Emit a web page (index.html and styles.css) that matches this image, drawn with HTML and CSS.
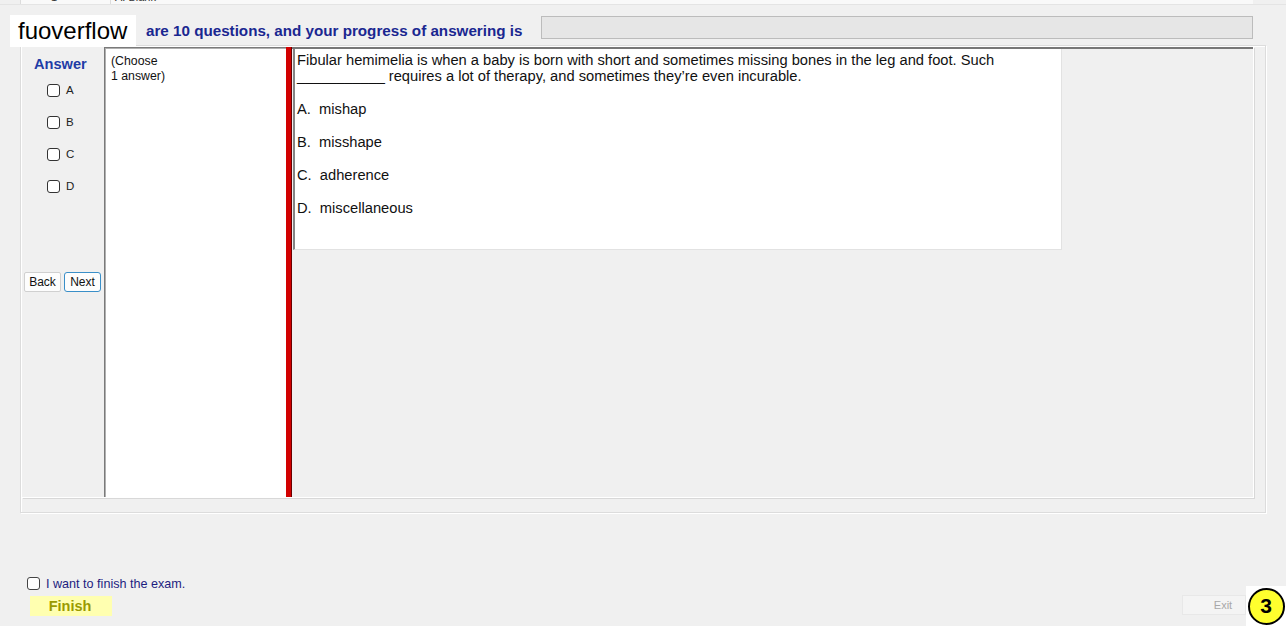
FILE: index.html
```html
<!DOCTYPE html>
<html>
<head>
<meta charset="utf-8">
<link rel="stylesheet" href="styles.css">
</head>
<body>
<div class="page">
  <div class="topstrip">
    <div class="cell c1"><span>1</span></div>
    <div class="cell c2"><span>A. Blank</span></div>
  </div>
  <div class="header">
    <div class="title">are 10 questions, and your progress of answering is</div>
    <div class="progress"></div>
  </div>
  <div class="group">
    <div class="frame">
      <div class="leftcol">
        <div class="answer">Answer</div>
        <div class="opts">
          <label class="opt"><span class="cb"></span>A</label>
          <label class="opt"><span class="cb"></span>B</label>
          <label class="opt"><span class="cb"></span>C</label>
          <label class="opt"><span class="cb"></span>D</label>
        </div>
        <div class="navbtns">
          <button class="btn">Back</button>
          <button class="btn next">Next</button>
        </div>
      </div>
      <div class="choose">(Choose<br>1 answer)</div>
      <div class="redbar"></div>
      <div class="right">
        <div class="qbox">
          <p class="qtext">Fibular hemimelia is when a baby is born with short and sometimes missing bones in the leg and foot. Such<br><span class="blank">___________</span> requires a lot of therapy, and sometimes they’re even incurable.</p>
          <p class="choice">A.&nbsp; mishap</p>
          <p class="choice">B.&nbsp; misshape</p>
          <p class="choice">C.&nbsp; adherence</p>
          <p class="choice">D.&nbsp; miscellaneous</p>
        </div>
      </div>
    </div>
  </div>
  <div class="bottom">
    <div class="finishcol">
      <label class="finishchk"><span class="cb"></span>I want to finish the exam.</label>
      <button class="finish">Finish</button>
    </div>
    <button class="exit">Exit</button>
  </div>
  <div class="logo">fuoverflow</div>
  <div class="badge"><span>3</span></div>
</div>
</body>
</html>
```

FILE: styles.css
```css
* { box-sizing: border-box; }
html, body { margin: 0; padding: 0; }
body {
  background: #f0f0f0;
  font-family: "Liberation Sans", Arial, sans-serif;
  color: #000;
  width: 1286px;
  height: 626px;
  overflow: hidden;
}
.page { position: relative; width: 1286px; height: 626px; }

.topstrip {
  height: 5px;
  display: flex;
  padding-left: 20px;
  overflow: hidden;
  border-bottom: 1px solid #e4e4e4;
}
.cell {
  background: #f9f9f9;
  border-left: 1px solid #dcdcdc;
  height: 5px;
  overflow: hidden;
  font-size: 11px;
  line-height: 11px;
}
.cell span { display: block; margin-top: -8px; color: #333; }
.c1 { width: 90px; padding-left: 30px; }
.c2 { width: 1143px; padding-left: 4px; }

.header {
  height: 40px;
  display: flex;
  align-items: flex-start;
  padding-left: 146px;
  padding-right: 33px;
}
.title {
  margin-top: 18px;
  width: 380px;
  flex: none;
  font-size: 15.2px;
  line-height: 16px;
  font-weight: bold;
  color: #1a2790;
  white-space: nowrap;
}
.progress {
  flex: 1;
  margin-left: 15px;
  margin-top: 11px;
  height: 23px;
  background: #e6e6e6;
  border: 1px solid #bcbcbc;
}

.group {
  margin-left: 20px;
  width: 1246px;
  height: 468px;
  border: 1px solid #dcdcdc;
  box-shadow: inset 1px 1px 0 #fff, 1px 1px 0 #fff;
  padding: 1px 11px 14px 1px;
}
.frame {
  height: 451px;
  display: flex;
  border-right: 1px solid #fff;
  border-bottom: 1px solid #fff;
  box-shadow: 1px 1px 0 #d8d8d8;
}

.leftcol { width: 82px; flex: none; }
.answer {
  padding-left: 12px;
  padding-top: 9px;
  height: 27px;
  font-size: 14.6px;
  line-height: 16px;
  font-weight: bold;
  color: #1f3ca6;
}
.opts { display: flex; flex-direction: column; padding-left: 25px; }
.opt {
  height: 32px;
  display: flex;
  align-items: center;
  font-size: 11.5px;
  color: #222;
}
.cb {
  width: 13px;
  height: 13px;
  border: 1px solid #333;
  border-radius: 3px;
  background: #fff;
  margin-right: 6px;
  flex: none;
}
.navbtns { margin-top: 70px; padding-left: 2px; display: flex; gap: 3px; }
.btn {
  width: 37px;
  height: 20px;
  padding: 0;
  font-family: "Liberation Sans", Arial, sans-serif;
  font-size: 12px;
  color: #111;
  background: #fdfdfd;
  border: 1px solid #d0d0d0;
  border-radius: 2px;
}
.btn.next { border-color: #3a8fc8; border-radius: 3px; }

.choose {
  width: 182px;
  flex: none;
  background: #fff;
  border-top: 1px solid #7a7a7a;
  border-left: 1px solid #7a7a7a;
  box-shadow: inset 1px 1px 0 #b0b0b0;
  padding: 6px 6px 0 6px;
  font-size: 12.3px;
  line-height: 15px;
  color: #111;
  height: 450px;
}
.redbar {
  width: 6px;
  flex: none;
  height: 450px;
  background: #d20000;
  border-right: 1px solid #6a0000;
}

.right {
  flex: 1;
  border-top: 2px solid #777;
  padding-left: 1px;
}
.qbox {
  width: 769px;
  height: 201px;
  background: #fff;
  border-left: 2px solid #858585;
  border-right: 1px solid #e2e2e2;
  border-bottom: 1px solid #e2e2e2;
  padding: 3px 0 0 2px;
  font-size: 14.7px;
  line-height: 16px;
  color: #111;
}
.blank { letter-spacing: -0.2px; }
.qtext { margin: 0; }
.choice { margin: 17.1px 0 0 0; }
.qtext + .choice { margin-top: 17px; }

.bottom {
  height: 112px;
  display: flex;
  justify-content: space-between;
  align-items: flex-end;
  padding: 0 40px 9px 27px;
}
.finishcol { display: flex; flex-direction: column; }
.finishchk {
  display: flex;
  align-items: center;
  font-size: 12.6px;
  color: #1d1d80;
  height: 15px;
}
.finishchk .cb { border-color: #444; margin-right: 6px; }
.finish {
  margin-top: 5px;
  margin-left: 3px;
  width: 82px;
  height: 20px;
  padding: 0 2px 0 0;
  border: none;
  background: #ffffb0;
  color: #9a9a00;
  font-family: "Liberation Sans", Arial, sans-serif;
  font-size: 14.5px;
  font-weight: bold;
}
.exit {
  margin-bottom: 1px;
  width: 64px;
  height: 20px;
  padding: 0 0 0 18px;
  border: 1px solid #e8e8e8;
  background: #f4f4f4;
  color: #a8a8a8;
  font-family: "Liberation Sans", Arial, sans-serif;
  font-size: 11px;
}

.logo {
  position: absolute;
  left: 10px;
  top: 15px;
  width: 126px;
  height: 32px;
  background: #fff;
  font-size: 24px;
  line-height: 32px;
  padding-left: 8px;
  color: #000;
}
.badge {
  position: absolute;
  left: 1246px;
  top: 586px;
  width: 40px;
  height: 40px;
  background: #fff;
  display: flex;
  align-items: center;
  justify-content: center;
}
.badge span {
  width: 37px;
  height: 37px;
  border-radius: 50%;
  border: 2px solid #000;
  background: #ffff2e;
  display: flex;
  align-items: center;
  justify-content: center;
  font-size: 21px;
  font-weight: bold;
  color: #000;
}
```
